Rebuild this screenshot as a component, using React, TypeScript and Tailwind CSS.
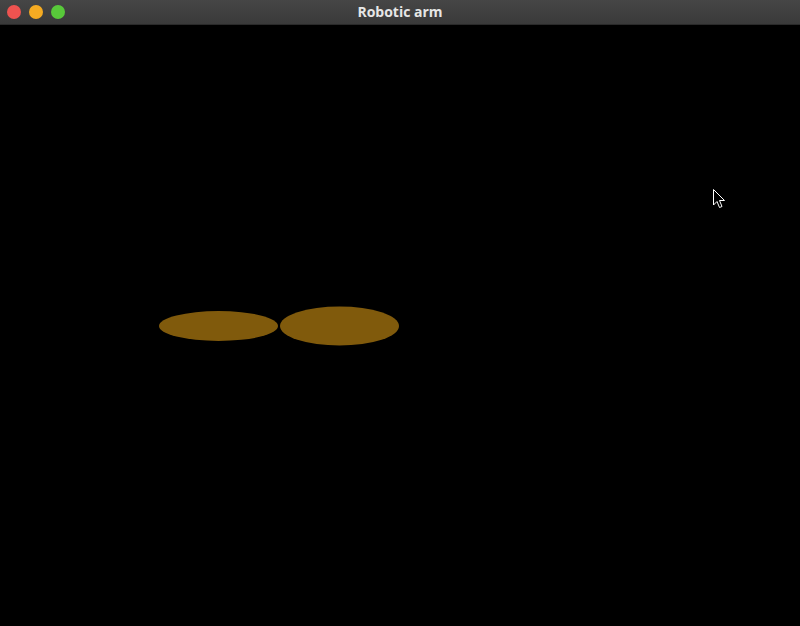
import * as React from 'react';

function TitleBar() {
  return (
    <div className="relative h-[25px] bg-gradient-to-b from-[#464646] to-[#3a3a3a] border-b border-[#2a2a2a] flex items-center justify-center shrink-0">
      <div className="absolute left-[7px] top-[5px] flex gap-2">
        <span className="w-[14px] h-[14px] rounded-full bg-[#ee5350]" />
        <span className="w-[14px] h-[14px] rounded-full bg-[#f5ab22]" />
        <span className="w-[14px] h-[14px] rounded-full bg-[#58c93a]" />
      </div>
      <span className="text-[14px] font-bold text-[#e6e6e6] leading-none" style={{ fontFamily: '"Open Sans", "DejaVu Sans", sans-serif' }}>
        Robotic arm
      </span>
    </div>
  );
}

export default function App() {
  return (
    <div className="w-[800px] h-[626px] bg-black flex flex-col overflow-hidden">
      <TitleBar />
      {/* GL viewport */}
      <div className="relative flex-1 bg-black">
        <svg width="800" height="601" viewBox="0 25 800 601" className="block">
          <ellipse cx="218.5" cy="326" rx="59.5" ry="15" fill="#805a0c" />
          <ellipse cx="339.5" cy="326" rx="59.5" ry="19.5" fill="#805a0c" />
          {/* mouse pointer */}
          <path
            d="M713.5 189.5 L713.5 205 L717 201.5 L719.5 207.5 L722 206.5 L719.5 200.5 L724.5 200.5 Z"
            fill="#000"
            stroke="#fff"
            strokeWidth="1"
            strokeLinejoin="round"
          />
        </svg>
      </div>
    </div>
  );
}
